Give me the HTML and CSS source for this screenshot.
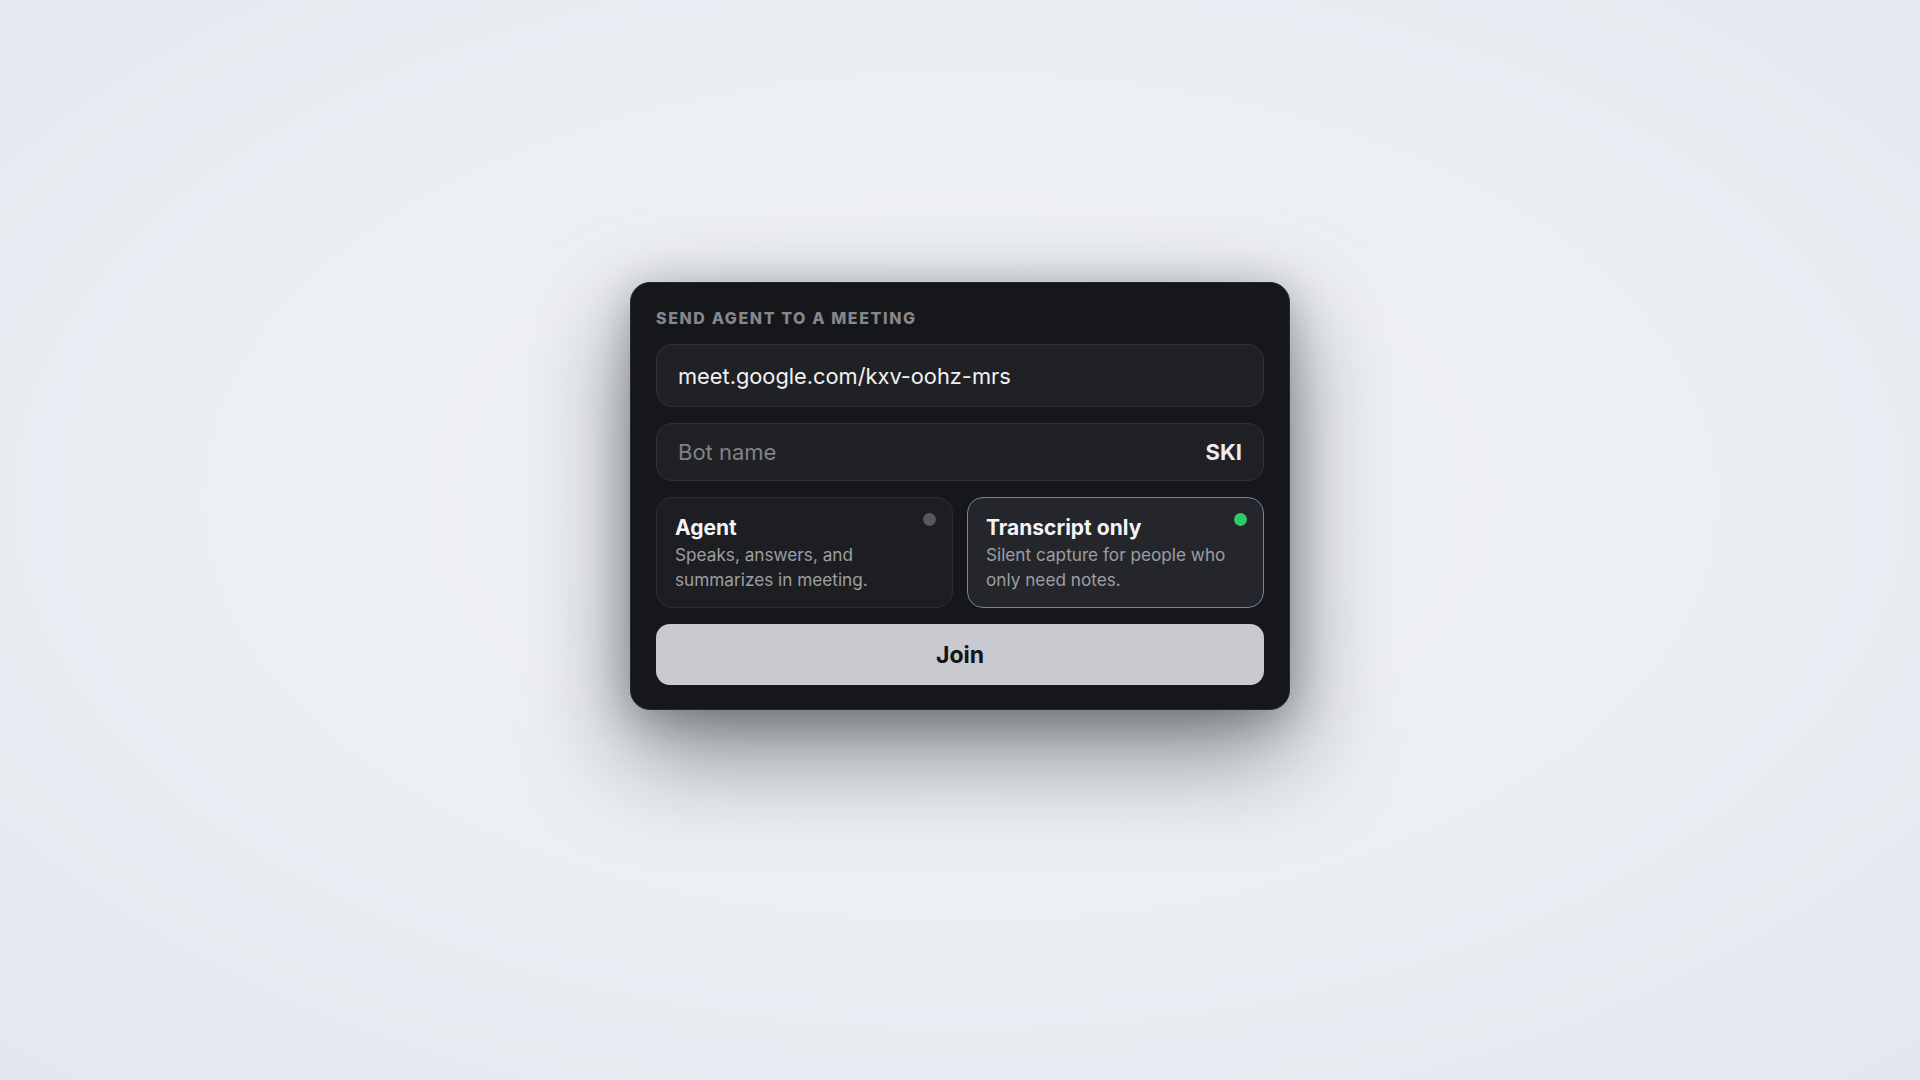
FILE: index.html
```html
<!DOCTYPE html>
<html lang="en">
<head>
<meta charset="utf-8">
<title>Send agent to a meeting</title>
<link rel="stylesheet" href="styles.css">
</head>
<body>
<main class="stage">
  <section class="panel">
    <h1 class="panel-title">Send agent to a meeting</h1>
    <div class="field field-url">
      <span class="field-value">meet.google.com/kxv-oohz-mrs</span>
    </div>
    <div class="field field-name">
      <span class="field-placeholder">Bot name</span>
      <span class="field-suffix">SKI</span>
    </div>
    <div class="modes">
      <div class="mode">
        <span class="mode-dot"></span>
        <div class="mode-title">Agent</div>
        <div class="mode-desc">Speaks, answers, and summarizes in meeting.</div>
      </div>
      <div class="mode mode-active">
        <span class="mode-dot mode-dot-on"></span>
        <div class="mode-title">Transcript only</div>
        <div class="mode-desc">Silent capture for people who only need notes.</div>
      </div>
    </div>
    <button class="join" type="button">Join</button>
  </section>
</main>
</body>
</html>
```

FILE: styles.css
```css
* { box-sizing: border-box; }

html, body {
  margin: 0;
  height: 100%;
}

body {
  font-family: Inter, "Noto Sans", "Liberation Sans", sans-serif;
  background: radial-gradient(ellipse 75% 75% at 50% 46%, #f1f3f7 0%, #ebeef3 55%, #e2e7ee 100%);
  color: #f2f2f4;
}

.stage {
  min-height: 100vh;
  display: flex;
  justify-content: center;
  align-items: center;
  padding-bottom: 88px;
}

.panel {
  width: 660px;
  background: #16171b;
  border: 1px solid #26282d;
  border-radius: 20px;
  padding: 25px 25px 24px;
  display: flex;
  flex-direction: column;
  gap: 16px;
  box-shadow: 0 40px 100px rgba(16, 20, 28, 0.5), 0 8px 40px rgba(16, 20, 28, 0.25);
}

.panel-title {
  margin: 0;
  font-size: 16px;
  line-height: 20px;
  font-weight: 800;
  letter-spacing: 0.1em;
  text-transform: uppercase;
  color: #86878c;
}

.field {
  display: flex;
  align-items: center;
  justify-content: space-between;
  background: #202125;
  border: 1px solid #313237;
  border-radius: 16px;
  padding: 0 21px;
  font-size: 22px;
}

.field-url { height: 63px; }
.field-name { height: 58px; }

.field-value { color: #f1f1f3; font-size: 21.8px; }
.field-placeholder { color: #818287; }
.field-suffix { font-weight: 700; color: #ececee; }

.modes {
  display: grid;
  grid-template-columns: 1fr 1fr;
  gap: 14px;
}

.mode {
  position: relative;
  background: #1d1e22;
  border: 1px solid #2d2e33;
  border-radius: 16px;
  padding: 16px 18px 13px;
  min-height: 111px;
}

.mode-active {
  background: #25262b;
  border-color: #6d87a6;
}

.mode-title {
  font-size: 21px;
  line-height: 28px;
  font-weight: 700;
  color: #f4f4f6;
}

.mode-desc {
  margin-top: 1px;
  font-size: 17.2px;
  line-height: 24.5px;
  color: #9d9ea3;
  max-width: 245px;
}

.mode-dot {
  position: absolute;
  top: 15px;
  right: 16px;
  width: 13px;
  height: 13px;
  border-radius: 50%;
  background: #56575c;
}

.mode-dot-on { background: #2ecc64; }

.join {
  height: 61px;
  border: 0;
  border-radius: 14px;
  background: #c8cacf;
  color: #131418;
  font-family: inherit;
  font-size: 23px;
  font-weight: 700;
  cursor: pointer;
}
```
